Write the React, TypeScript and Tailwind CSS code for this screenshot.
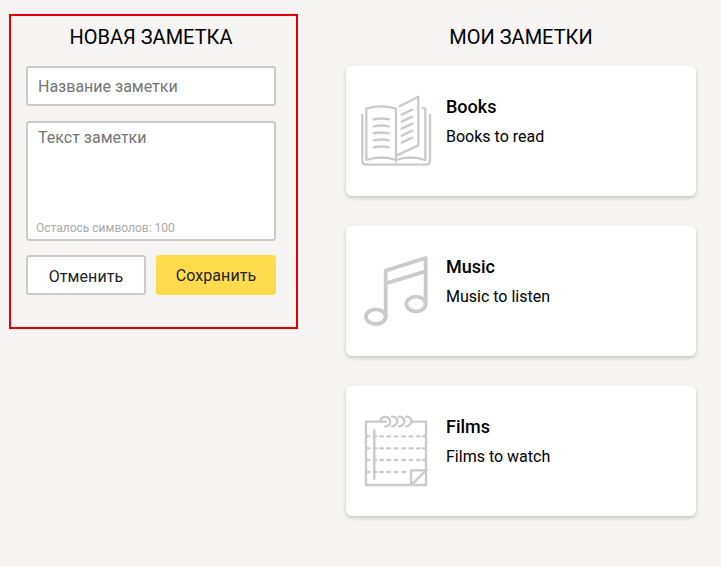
import type { ReactNode } from "react";

const iconProps = {
  viewBox: "33 30 210 210",
  fill: "none",
  stroke: "#cbcbcb",
  strokeWidth: 7,
  strokeLinecap: "round" as const,
  strokeLinejoin: "round" as const,
  className: "block size-[70px] shrink-0 overflow-visible",
};

function BookIcon() {
  return (
    <svg {...iconProps}>
      <path d="M37 86V223Q37 236 50 236H227Q240 236 240 223V86" />
      <path d="M138 222V68Q94 54 49 68V222Q94 207 138 222Q182 207 226 222V68L219 66" />
      <path d="M138 222V236" strokeWidth="4" />
      <path d="M149 61L205 32V178L138 209" />
      <path d="M71 100Q94 95 117 100M71 121Q94 116 117 121M71 142Q94 137 117 142M71 163Q94 158 117 163M71 184Q94 179 117 184" />
      <path d="M155 86L187 71M155 107L187 92M155 128L187 113M155 149L187 134M155 170L187 155" />
    </svg>
  );
}

function MusicIcon() {
  return (
    <svg {...iconProps} strokeWidth={11.5}>
      <path d="M107 212V74L227 36V174M107 112L227 76" />
      <ellipse cx="77.500" cy="212" rx="29.500" ry="22" />
      <ellipse cx="198" cy="174" rx="29" ry="22" />
    </svg>
  );
}

function NotepadIcon() {
  return (
    <svg {...iconProps} strokeLinejoin="miter">
      <path d="M94 47H48V237H228V47H187" />
      <path d="M92 44C93 30 116 28 120 43C123 54 115 62 105 61M126 32C139 30 147 44 139 54Q134 61 126 61M147 32C160 30 168 44 160 54Q155 61 147 61M168 32C181 30 189 44 181 54Q176 61 168 61" />
      <path d="M108 47H98" />
      <path d="M73 72V219" />
      <path d="M51 91H57M51 127H57M51 162H57M51 198H57M71 91H79M71 127H79M71 162H79M71 198H79M91 91H99M91 127H99M91 162H99M91 198H99M112 91H120M112 127H120M112 162H120M112 198H120M134 91H142M134 127H142M134 162H142M134 198H142M157 91H165M157 127H165M157 162H165M157 198H165M179 91H187M179 127H187M179 162H187M201 91H209M201 127H209M201 162H209M219 91H225M219 127H225M219 162H225" />
      <path d="M183 237V193H228L185 236" />
    </svg>
  );
}

function Note({ icon, title, text }: { icon: ReactNode; title: string; text: string }) {
  return (
    <article className="flex h-[130px] gap-[15px] rounded-md bg-white px-[15px] pt-[30px] shadow-[0_2px_4px_rgba(0,0,0,0.2)]">
      {icon}
      <div>
        <h3 className="text-[18px] leading-[22px] font-medium">{title}</h3>
        <p className="mt-[9px] text-[16px] leading-5">{text}</p>
      </div>
    </article>
  );
}

export default function App() {
  return (
    <main className="flex h-[566px] w-[721px] items-start bg-[#f6f5f3] font-[Roboto,sans-serif] text-black">
      <section className="mt-[14px] ml-[9px] h-[315px] w-[289px] border-2 border-[#e60000] pt-[9px] pl-[15px]">
        <form className="w-[250px]" onSubmit={(e) => e.preventDefault()}>
          <h2 className="text-center text-[20px] leading-6">НОВАЯ ЗАМЕТКА</h2>
          <input
            placeholder="Название заметки"
            className="mt-[17px] block h-10 w-full rounded-[3px] border-2 border-[#cbcbcb] bg-white px-[10px] text-[16px] placeholder:text-[#757575]"
          />
          <div className="mt-[15px] flex h-[120px] flex-col rounded-[3px] border-2 border-[#cbcbcb] bg-white">
            <textarea
              placeholder="Текст заметки"
              className="block min-h-0 w-full flex-1 resize-none px-[10px] pt-[5px] text-[16px] leading-5 placeholder:text-[#757575]"
            />
            <span className="px-2 pb-[3px] text-[12px] leading-4 text-[#aaa]">Осталось символов: 100</span>
          </div>
          <div className="mt-[14px] flex gap-[10px]">
            <button type="button" className="h-10 w-[120px] rounded-[3px] border-2 border-[#cbcbcb] bg-white pt-[3px] text-[16px] tracking-[0.1px] text-[#222]">
              Отменить
            </button>
            <button type="submit" className="h-10 w-[120px] rounded-[3px] bg-[#ffdb4d] pt-[2px] text-[16px] tracking-[0.1px] text-[#222]">
              Сохранить
            </button>
          </div>
        </form>
      </section>
      <section className="ml-12 w-[350px] pt-[25px]">
        <h2 className="text-center text-[20px] leading-6">МОИ ЗАМЕТКИ</h2>
        <div className="mt-[17px] flex flex-col gap-[30px]">
          <Note icon={<BookIcon />} title="Books" text="Books to read" />
          <Note icon={<MusicIcon />} title="Music" text="Music to listen" />
          <Note icon={<NotepadIcon />} title="Films" text="Films to watch" />
        </div>
      </section>
    </main>
  );
}
